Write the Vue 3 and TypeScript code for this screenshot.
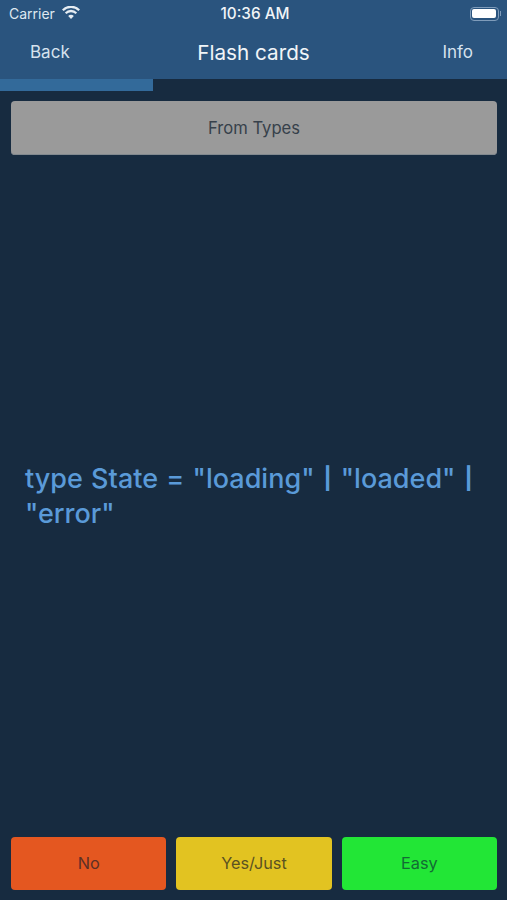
<script setup lang="ts">
const answers = [
  { label: 'No', cls: 'no' },
  { label: 'Yes/Just', cls: 'yes' },
  { label: 'Easy', cls: 'easy' },
]
</script>

<template>
  <div class="screen">
    <header class="top">
      <div class="status">
        <div class="status-left">
          <span>Carrier</span>
          <svg class="wifi" viewBox="0 0 18 13" width="18" height="13">
            <path d="M9 13 6.2 10a3.9 3.9 0 0 1 5.6 0Z" fill="#e6edf3" />
            <path d="M4.4 8.1a6.4 6.4 0 0 1 9.2 0l1.5-1.7a8.6 8.6 0 0 0-12.2 0Z" fill="#e6edf3" />
            <path d="M1.6 5.1a10.4 10.4 0 0 1 14.8 0l1.6-1.7a12.7 12.7 0 0 0-18 0Z" fill="#e6edf3" />
          </svg>
        </div>
        <span class="time">10:36 AM</span>
        <div class="status-right">
          <span class="battery"><span class="charge"></span></span>
          <span class="nub"></span>
        </div>
      </div>
      <nav class="nav">
        <span class="link back">Back</span>
        <span class="title">Flash cards</span>
        <span class="link info">Info</span>
      </nav>
    </header>
    <div class="progress"><div class="progress-fill"></div></div>
    <button class="deck">From Types</button>
    <main class="card">
      <p class="code">type State = "loading" <span class="pipe">|</span> "loaded" <span class="pipe">|</span> "error"</p>
    </main>
    <footer class="answers">
      <button v-for="a in answers" :key="a.label" class="answer" :class="a.cls">{{ a.label }}</button>
    </footer>
  </div>
</template>

<style scoped>
.screen {
  width: 507px;
  height: 900px;
  background: #172b40;
  display: flex;
  flex-direction: column;
  font-family: Inter, "Liberation Sans", sans-serif;
  overflow: hidden;
}
.top {
  height: 79px;
  background: #2a547e;
  display: flex;
  flex-direction: column;
  flex: none;
}
.status {
  height: 27px;
  padding: 0 6px 0 9px;
  display: grid;
  grid-template-columns: 1fr auto 1fr;
  align-items: center;
  color: #dfe8f0;
  font-size: 14px;
}
.status-left {
  display: flex;
  align-items: center;
  gap: 7px;
}
.wifi {
  margin-top: -2px;
}
.time {
  font-size: 15.3px;
  font-weight: 500;
  color: #f0f4f8;
}
.status-right {
  display: flex;
  justify-content: flex-end;
  align-items: center;
  gap: 1px;
}
.battery {
  width: 29px;
  height: 14px;
  border: 1px solid #7f9cba;
  border-radius: 4px;
  padding: 1.5px;
  box-sizing: border-box;
  display: flex;
}
.charge {
  flex: 1;
  background: #fff;
  border-radius: 2px;
}
.nub {
  width: 1.5px;
  height: 5px;
  background: #7f9cba;
}
.nav {
  flex: 1;
  display: grid;
  grid-template-columns: 1fr auto 1fr;
  align-items: center;
  padding: 0 30px 2px 30px;
}
.link {
  font-size: 17px;
  color: #d6e2ee;
}
.info {
  text-align: right;
  padding-right: 4px;
}
.title {
  font-size: 20.7px;
  color: #f1f5f8;
  margin-top: 1px;
}
.progress {
  height: 12px;
  flex: none;
}
.progress-fill {
  width: 153px;
  height: 100%;
  background: #336a9a;
}
.deck {
  flex: none;
  margin: 10px 10px 0 11px;
  height: 54px;
  border: none;
  border-radius: 4px;
  background: #9a9a9a;
  color: #37414b;
  font: inherit;
  font-size: 16.6px;
  padding-bottom: 2px;
  box-shadow: inset 0 -1px 0 #82898f;
}
.card {
  flex: 1;
  display: flex;
  align-items: center;
  padding: 0 25px;
}
.code {
  margin: 0;
  font-size: 27px;
  line-height: 35px;
  font-weight: 550;
  word-spacing: 1.1px;
  color: #5a9ad8;
}
.pipe {
  display: inline-block;
  font-weight: 600;
  transform: scaleY(0.8);
}
.answers {
  flex: none;
  display: grid;
  grid-template-columns: repeat(3, 1fr);
  gap: 10px;
  padding: 0 10px 10px 11px;
}
.answer {
  height: 53px;
  border: none;
  border-radius: 4px;
  font: inherit;
  font-size: 16.3px;
  padding-bottom: 3px;
}
.no {
  background: #e45720;
  color: #5c3026;
}
.yes {
  background: #e2c321;
  color: #5b5222;
}
.easy {
  background: #22e636;
  color: #136b35;
}
</style>
